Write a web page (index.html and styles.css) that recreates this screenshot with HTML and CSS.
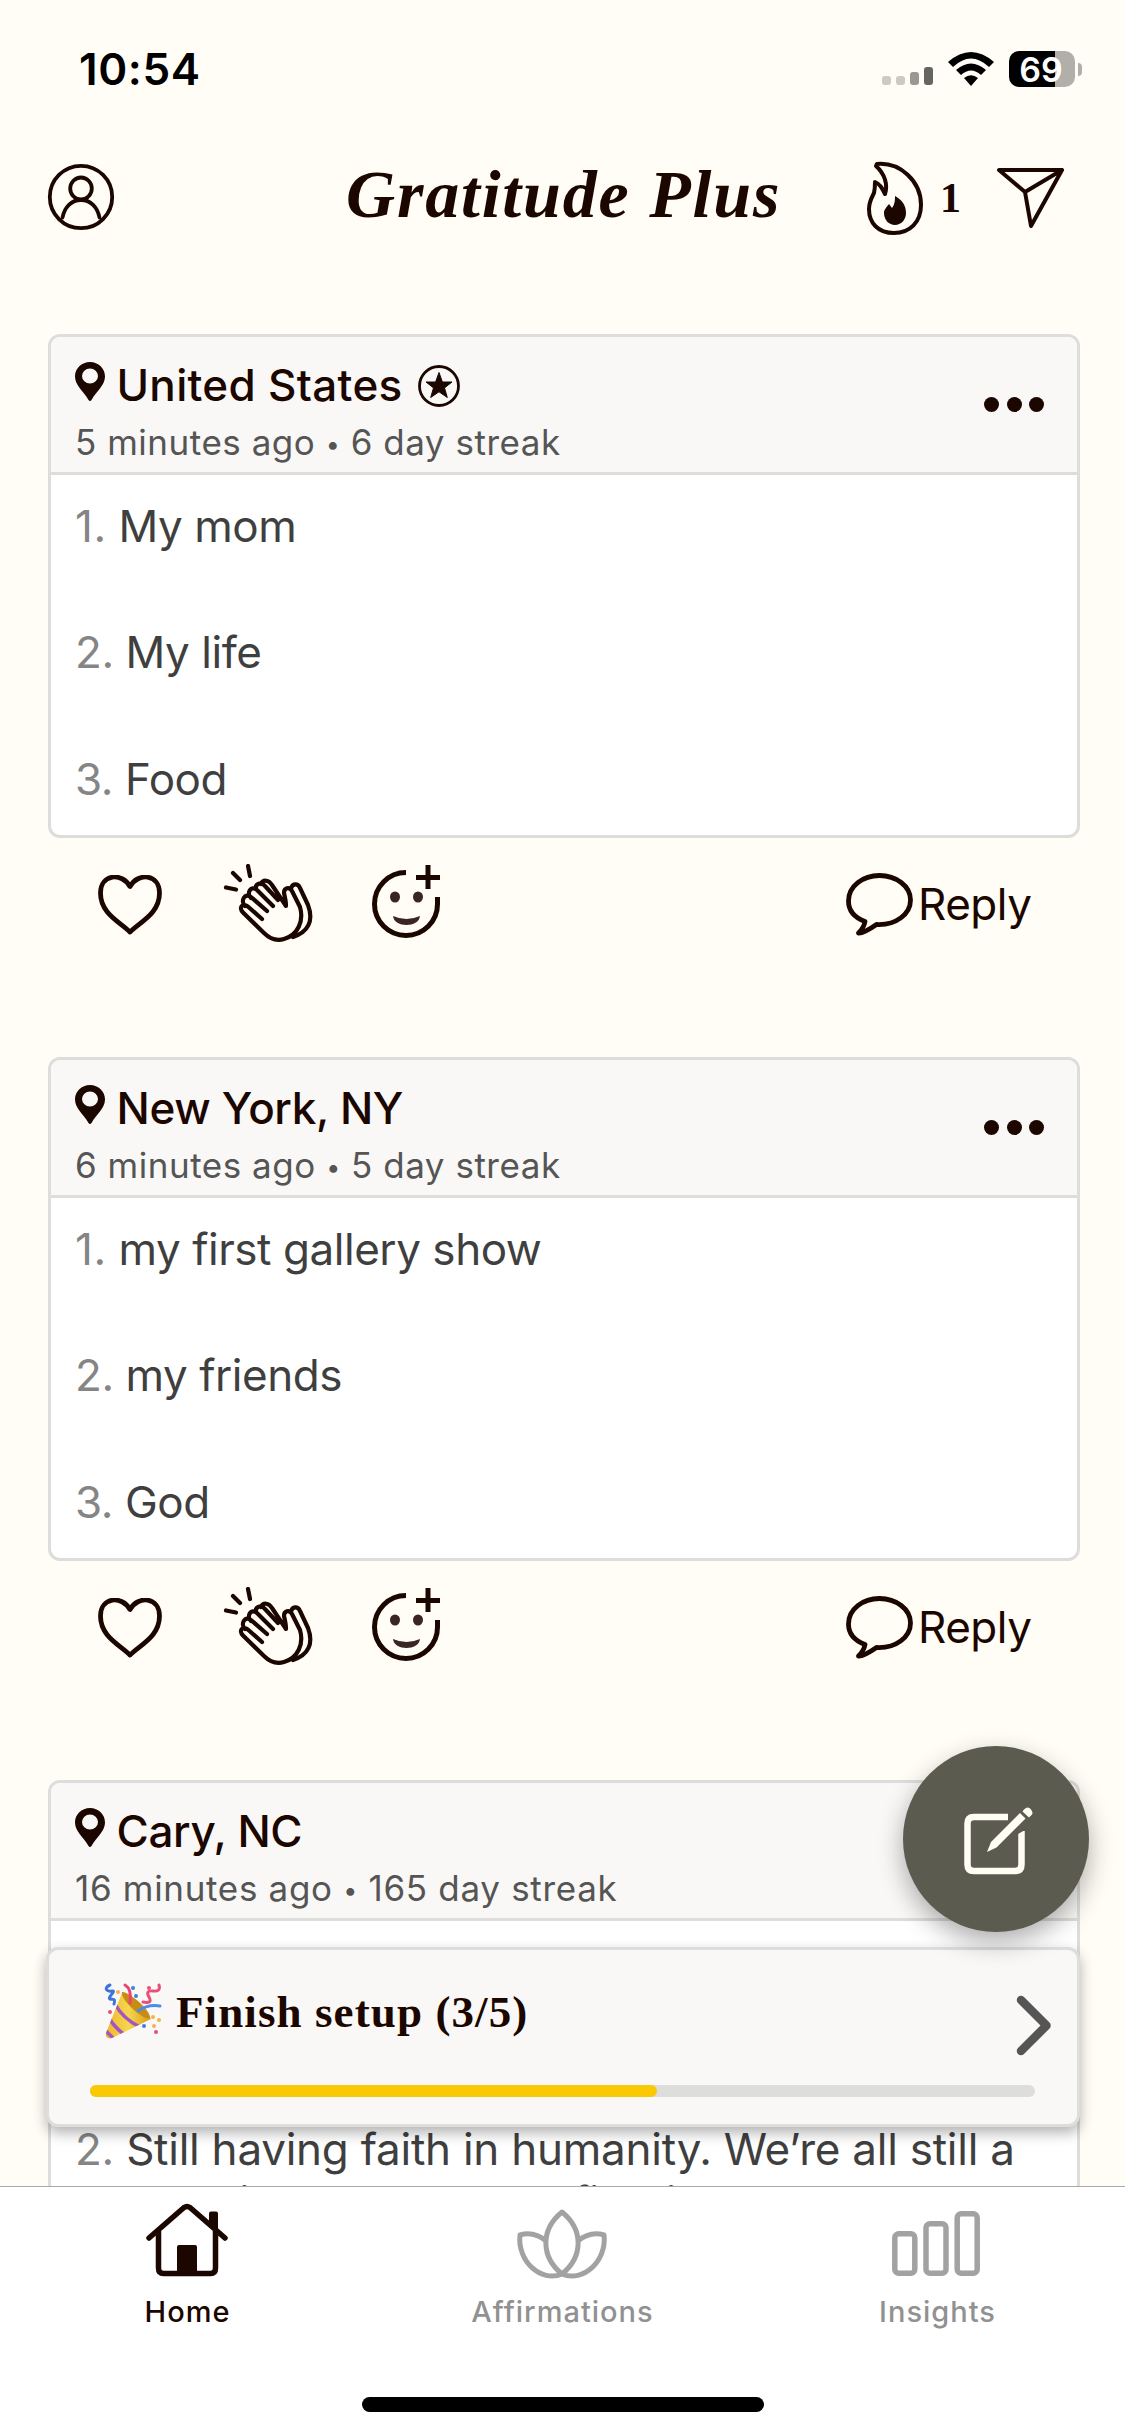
FILE: index.html
```html
<!DOCTYPE html>
<html lang="en">
<head>
<meta charset="utf-8">
<title>Gratitude Plus</title>
<link rel="stylesheet" href="styles.css">
</head>
<body>
<svg class="sprite" aria-hidden="true">
  <symbol id="pin" viewBox="0 0 30 39"><path fill-rule="evenodd" d="M15 0C6.500 0 0 6.500 0 14.500c0 8.500 8 14 13.500 23.500q1.500 2 3 0C22 28.500 30 23 30 14.500 30 6.500 23.500 0 15 0Zm0 6.500a8 7.500 0 1 0 0 15 8 7.500 0 0 0 0-15Z" fill="#1b0600"/></symbol>
  <symbol id="heart" viewBox="0 0 64 60"><path d="M32 11.500C24-3 2.500-1 2.500 18c0 21 20 29 29.500 39C41.500 47 61.500 39 61.500 18 61.500-1 40-3 32 11.500Z"/></symbol>
  <symbol id="clap" viewBox="0 0 90 80"><path d="M3 23.500l10 2M10 9l7 7M25 2l2 10M39 55L26 43.500c-6-6-11 0-6 5L41 69c6 6 13 8 20 6 14-4 20-18 16-32L69 27c-3-5-8-3-8 2 1 4 2 8 2 13L49 21c-3-5-9-6-11-1M44 47L28 33c-6-5-11 4-6 9M50 42L34 26c-6-5-11 3-6 8M55 36L42 22c-4-5-10-2-9 3M68 25c1-6 7-6 9-1l8 17c6 16 0 27-15 32"/></symbol>
  <symbol id="smile" viewBox="0 0 68 74"><path d="M34 7.500A31.500 31.500 0 1 0 65.500 39v-7" stroke-width="5"/><path d="M56 0v24M44 12.500h24" stroke-width="5" stroke-linecap="butt"/><g fill="#3a2523" stroke="none"><ellipse cx="23" cy="32" rx="5" ry="5.500"/><ellipse cx="46" cy="32" rx="5" ry="5.500"/><path d="M21 51q13.500 6 27 0c-1 12-26 12-27 0Z"/></g></symbol>
  <symbol id="bubble" viewBox="0 0 67 63"><path d="M19 48.500C7 44 2.500 36 2.500 28 2.500 13 17 2.500 33.500 2.500S64.500 13 64.500 27 50 52.500 30.500 51.500C24 56 17 60.500 12.500 60c4-4 6-8 6.500-11.500Z"/></symbol>
</svg>
<div class="screen">
  <div class="status">
    <span class="time">10:54</span>
    <svg class="cell" viewBox="0 0 52 18"><rect y="9" width="9" height="9" rx="3" fill="#cbcac3"/><rect x="14" y="9" width="9" height="9" rx="3" fill="#cbcac3"/><rect x="28" y="5" width="9" height="13" rx="3" fill="#999892"/><rect x="42" width="9" height="18" rx="3" fill="#666660"/></svg>
    <svg class="wifi" viewBox="0 0 46 34"><path d="M0 10Q23-10 46 10l-5 5Q23-2 5 15ZM8 18Q23 5 38 18l-5 5Q23 14 13 23ZM16 26q7-5.500 14 0l-7 8Z"/></svg>
    <div class="battery"><span>69</span></div><i class="nub"></i>
  </div>
  <header class="top">
    <svg class="user line" viewBox="0 0 66 66"><circle cx="33" cy="33" r="31.200"/><ellipse cx="33" cy="24.500" rx="10.800" ry="11"/><path d="M14.500 53.500c2-10.500 9-17.500 18.500-17.500s16.500 7 18.500 17.500"/></svg>
    <h1>Gratitude Plus</h1>
    <svg class="flame line" viewBox="0 0 56 73"><path d="M10 2C33 0 54 19 54 43 54 60 43 71 27 71S2 61 2 47c0-7 2-10 5-16 1-4 1-7 1-11 5 2 7 6 10 12C21 23 18 12 9 4Z"/><path d="M28 34c7 4 11 9 11 17 0 7-5 12-11 12S17 58 17 51c0-4 3-6 5-9l3 4c3-4 3-8 3-12Z" fill="#1b0600" stroke="none"/></svg>
    <span class="count">1</span>
    <svg class="send line" viewBox="0 0 67 60"><path d="M2 2h63L34 58 28 24ZM28 24L65 2"/></svg>
  </header>

  <main class="feed">
    <article class="post">
      <div class="card">
        <div class="head">
          <div><h2 class="wide"><svg class="pin"><use href="#pin"/></svg><span>United States</span><svg class="star" viewBox="0 0 42 42"><circle cx="21" cy="21" r="19.500" fill="none" stroke="#1b0600" stroke-width="2.800"/><path d="M21 7.500l3.400 9.500h9.600l-7.500 5.900 2.800 9.600-8.300-5.700-8.300 5.700 2.800-9.600L8 17h9.600Z" stroke="#1b0600" stroke-linejoin="round"/></svg></h2>
          <p>5 minutes ago <small>•</small> 6 day streak</p></div>
          <div class="dots"><i></i><i></i><i></i></div>
        </div>
        <ol><li><b class="one">1.</b> My mom</li><li><b>2.</b> My life</li><li><b>3.</b> Food</li></ol>
      </div>
      <div class="actions">
        <svg class="heart line"><use href="#heart"/></svg><svg class="clap line"><use href="#clap"/></svg><svg class="smile line"><use href="#smile"/></svg>
        <svg class="bubble line"><use href="#bubble"/></svg><span>Reply</span>
      </div>
    </article>
    <article class="post">
      <div class="card">
        <div class="head">
          <div><h2><svg class="pin"><use href="#pin"/></svg><span>New York, NY</span></h2>
          <p>6 minutes ago <small>•</small> 5 day streak</p></div>
          <div class="dots"><i></i><i></i><i></i></div>
        </div>
        <ol><li><b class="one">1.</b> my first gallery show</li><li><b>2.</b> my friends</li><li><b>3.</b> God</li></ol>
      </div>
      <div class="actions">
        <svg class="heart line"><use href="#heart"/></svg><svg class="clap line"><use href="#clap"/></svg><svg class="smile line"><use href="#smile"/></svg>
        <svg class="bubble line"><use href="#bubble"/></svg><span>Reply</span>
      </div>
    </article>
    <article class="post">
      <div class="card">
        <div class="head">
          <div><h2><svg class="pin"><use href="#pin"/></svg><span>Cary, NC</span></h2>
          <p class="long">16 minutes ago <small>•</small> 165 day streak</p></div>
        </div>
        <ol class="lower"><li><b>2.</b> Still having faith in humanity. We’re all still a<br><span class="wrap">work in progress, but fighting</span></li></ol>
      </div>
    </article>
  </main>

  <nav class="tabs">
    <div class="tab active"><svg class="home" viewBox="0 0 82 73"><g fill="none" stroke="#1b0600" stroke-width="5.500" stroke-linecap="round" stroke-linejoin="round"><path d="M3 34L38 3.500q3-2 6 0L79 34M12.500 27v37q0 5.500 5 5.500h47q5 0 5-5.500V27"/></g><path d="M63 9.500q0-2 2-2h5q2 0 2 2V30l-9-8ZM31 43q0-2 2-2h16q2 0 2 2v27H31Z"/></svg><span>Home</span></div>
    <div class="tab"><svg class="lotus" viewBox="0 0 90 70"><g fill="none" stroke="#a2a2a2" stroke-width="5" stroke-linejoin="round"><path d="M45 3C23 21 24 48 45 65 66 48 67 21 45 3ZM29 32Q17 22 3 26C0 52 24 74 45 65M61 32Q73 22 87 26C90 52 66 74 45 65"/></g></svg><span>Affirmations</span></div>
    <div class="tab"><svg class="bars" viewBox="0 0 88 65"><g fill="none" stroke="#a2a2a2" stroke-width="5.500"><rect x="2.800" y="22.800" width="20" height="39.500" rx="4"/><rect x="34" y="12.800" width="20" height="49.500" rx="4"/><rect x="65.200" y="2.800" width="20" height="59.500" rx="4"/></g></svg><span>Insights</span></div>
    <i class="indicator"></i>
  </nav>

  <section class="setup">
    <div class="setup-main">
      <svg class="party" viewBox="0 0 56 56"><defs><linearGradient id="gold"><stop stop-color="#f0b72a"/><stop offset=".5" stop-color="#f6d64c"/><stop offset="1" stop-color="#d99c1c"/></linearGradient><clipPath id="cone"><path d="M17 10Q35 16 46 36L7 55Q0 57 1 50Z"/></clipPath></defs>
      <path d="M17 10Q35 16 46 36L7 55Q0 57 1 50Z" fill="url(#gold)"/><g clip-path="url(#cone)" fill="none" stroke="#a455c4" stroke-width="3.500"><path d="M10 21Q18 36 35 44M4 35Q10 45 20 52M0 47L9 56"/></g><path d="M17 9C23 8 46 27 45 35 40 39 15 17 17 9Z" fill="#c98b13"/>
      <g fill="none" stroke-width="3" stroke-linecap="round"><path d="M5 2C-2 5 2 9 7 8S2 15 5 16s6-1 4 5" stroke="#3d74dc"/><path d="M20 2Q27 6 25 20" stroke="#eb4270"/><path d="M54 2q2 7-6 6t-4 6-6 5" stroke="#eb4e79"/><path d="M33 28Q43 21 55 23" stroke="#4c8ce8"/></g>
      <g fill="#3d80df"><circle cx="28" cy="5" r="2"/><circle cx="31" cy="13" r="2"/><circle cx="39" cy="43" r="2"/></g><g fill="#eb4e79"><circle cx="44" cy="5" r="2"/><circle cx="5" cy="29" r="2"/><circle cx="51" cy="49" r="2"/></g><g fill="#f3b34c"><circle cx="13" cy="9" r="2"/><circle cx="48" cy="34" r="2"/><circle cx="54" cy="37" r="2"/><circle cx="49" cy="43" r="2"/></g></svg>
      <span>Finish setup (3/5)</span>
      <svg class="chev" viewBox="0 0 36 61"><path d="M5 5l25.500 25.500L5 56" fill="none" stroke="#555" stroke-width="8.500" stroke-linecap="round" stroke-linejoin="round"/></svg>
    </div>
    <div class="progress"><i></i></div>
  </section>
  <div class="fab"><svg viewBox="0 0 68 68"><path d="M44 10H10q-6.500 0-6.500 6.500v41Q3.500 64 10 64h41q6.500 0 6.500-6.500V24" fill="none" stroke="#fffdf4" stroke-width="6.500"/><path d="M49 6h19v13L54 27 41 19Z" fill="#5c5b50"/><path d="M23 45l4-10L56 6l5.500 5.500-29 29ZM58.500 4.500l1.500-2q4-4 7 0t0 6l-2 2Z" fill="#fffdf4"/></svg></div>
</div>
</body>
</html>
```
FILE: styles.css
```css
* { box-sizing: border-box; }
body { margin: 0; background: #fffdf5; color: #1b0600; font-family: Inter, "Liberation Sans", sans-serif; }
h1, h2, p, ol { margin: 0; padding: 0; font-weight: 500; }
svg { display: block; flex: none; overflow: visible; }
.sprite { position: absolute; width: 0; height: 0; }
.line { fill: none; stroke: #1b0600; stroke-width: 4; stroke-linecap: round; stroke-linejoin: round; }
.screen { position: relative; width: 1125px; height: 2436px; overflow: hidden; display: flex; flex-direction: column; }

.status { height: 138px; flex: none; display: flex; align-items: flex-start; padding: 51px 43px 0 79px; color: #000; }
.time { font-size: 44px; line-height: 36px; font-weight: 600; flex: 1; letter-spacing: .6px; }
.cell { width: 52px; height: 18px; margin: 16px 14px 0 0; }
.wifi { width: 46px; height: 34px; margin: 1px 15px 0 0; }
.battery { width: 66px; height: 36px; border-radius: 10px; background: linear-gradient(90deg, #000 46px, #b0afa9 46px); color: #fff; font-size: 34px; font-weight: 600; line-height: 37px; padding-right: 2px; text-align: center; }
.nub { width: 4px; height: 13px; margin: 12px 0 0 3px; border-radius: 0 4px 4px 0; background: #b0afa9; }

.top { height: 196px; flex: none; display: flex; align-items: flex-start; padding: 24px 61px 0 48px; }
.user { width: 66px; height: 66px; margin-top: 2px; stroke-width: 3.800; }
h1 { width: 519px; margin: -7px 0 0 232px; font: italic bold 68px/78px "Liberation Serif", serif; letter-spacing: 1.800px; white-space: nowrap; }
.flame { width: 56px; height: 73px; margin-left: 2px; }
.count { width: 56px; padding-left: 17px; font: bold 42px/72px "Liberation Serif", serif; }
.send { width: 67px; height: 60px; margin: 6px 0 0 18px; }

.feed { height: 1852px; flex: none; overflow: hidden; padding: 0 45px 0 48px; }
.post { height: 723px; }
.card { height: 504px; border: 3px solid #dddddb; border-radius: 12px; background: #fff; overflow: hidden; }
.head { height: 138px; display: flex; justify-content: space-between; padding: 19px 33px 0 24px; background: #f9f8f6; border-bottom: 3px solid #dddddb; }
h2 { display: flex; height: 58px; font-size: 44px; line-height: 58px; letter-spacing: -.350px; white-space: nowrap; }
.wide { letter-spacing: .300px; }
.pin { width: 30px; height: 39px; margin: 6px 11.500px 0 0; }
.star { width: 42px; height: 42px; margin: 9px 0 0 15px; fill: #1b0600; }
.head p { font-size: 35px; line-height: 57px; font-weight: 400; letter-spacing: .520px; color: #555; white-space: nowrap; }
.head .long { letter-spacing: .680px; }
.head small { font-size: 25px; vertical-align: 2px; line-height: 1; }
.dots { display: flex; gap: 7.500px; padding-top: 41px; }
.dots i { width: 15px; height: 15px; border-radius: 50%; background: #1b0600; }
ol { list-style: none; padding: 25px 24px 0; color: #3f3f3f; }
li { min-height: 126.400px; font-size: 44px; line-height: 53px; font-weight: 400; letter-spacing: -.450px; white-space: nowrap; }
li b { font-weight: 400; color: #858585; }
.one { letter-spacing: .500px; }
.lower { padding-top: 202px; }
.lower li { line-height: 53px; letter-spacing: -.250px; }
.wrap { padding-left: 50px; }

.actions { height: 110px; display: flex; align-items: flex-start; padding: 26px 0 0 50px; }
.actions .line { stroke-width: 4.800; }
.heart { width: 64px; height: 60px; margin-top: 11px; }
.actions .clap { width: 90px; height: 80px; margin-left: 61px; stroke-width: 4.200; }
.smile { width: 68px; height: 74px; margin: 1px 406px 0 59px; }
.smile.line { stroke-linecap: butt; }
.bubble { width: 67px; height: 63px; margin-top: 9px; }
.actions span { margin-left: 5px; font-size: 44px; line-height: 81px; letter-spacing: -.500px; }

.tabs { position: relative; flex: none; height: 250px; display: flex; background: #fff; border-top: 1px solid #aaa; }
.tab { width: 375px; display: flex; flex-direction: column; align-items: center; justify-content: flex-start; color: #919191; font-size: 29px; font-weight: 500; }
.tab svg { margin: 17px 2px 0 0; }
.tab span { line-height: 40px; position: static; margin-top: 15px; letter-spacing: 1px; }
.active { color: #1b0600; fill: #1b0600; }
.home { width: 82px; height: 73px; }
.tab .lotus { width: 90px; height: 70px; margin: 22px 1px -2px 0; }
.tab .bars { width: 88px; height: 65px; margin: 24px 3px 1px 0; }
.indicator { position: absolute; left: 362px; top: 210px; width: 402px; height: 15px; border-radius: 8px; background: #000; }

.setup { position: absolute; left: 46px; top: 1947px; width: 1034px; height: 180px; padding: 0 42px 0 41px; background: #f9f8f6; border: 3px solid #dddddb; border-radius: 12px; box-shadow: 0 6px 14px rgba(0, 0, 0, .3); }
.setup-main { height: 135px; display: flex; align-items: flex-start; margin-right: -17px; padding: 33px 0 0 15px; }
.party { width: 56px; height: 56px; }
.setup-main span { flex: 1; margin-left: 15px; font: bold 45px/58px "Liberation Serif", serif; letter-spacing: 1.100px; white-space: nowrap; }
.chev { width: 36px; height: 61px; margin-top: 12px; }
.progress { height: 12px; border-radius: 6px; background: #dddddb; }
.progress i { display: block; width: 60%; height: 12px; border-radius: 6px; background: #fac905; }
.fab { position: absolute; left: 903px; top: 1746px; width: 186px; height: 186px; border-radius: 50%; background: #5c5b50; display: grid; place-items: center; box-shadow: 0 10px 26px rgba(0, 0, 0, .32); }
.fab svg { width: 68px; height: 68px; margin: 4px 0 0 4px; }
```
